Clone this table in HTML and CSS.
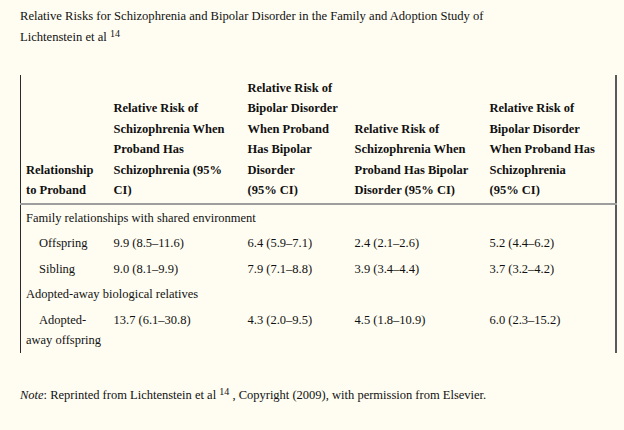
FILE: index.html
```html
<!DOCTYPE html>
<html lang="en">
<head>
<meta charset="utf-8">
<title>Relative Risks for Schizophrenia and Bipolar Disorder</title>
<link rel="stylesheet" href="styles.css">
</head>
<body>
<p class="caption">Relative Risks for Schizophrenia and Bipolar Disorder in the Family and Adoption Study of Lichtenstein et al <sup>14</sup></p>
<table class="risk-table">
  <colgroup>
    <col class="c1"><col class="c2"><col class="c3"><col class="c4"><col class="c5">
  </colgroup>
  <thead>
    <tr>
      <th>Relationship to Proband</th>
      <th>Relative Risk of Schizophrenia When Proband Has Schizophrenia (95% CI)</th>
      <th>Relative Risk of Bipolar Disorder When Proband Has Bipolar Disorder<br>(95% CI)</th>
      <th>Relative Risk of Schizophrenia When Proband Has Bipolar Disorder (95% CI)</th>
      <th>Relative Risk of Bipolar Disorder When Proband Has Schizophrenia<br>(95% CI)</th>
    </tr>
  </thead>
  <tbody>
    <tr><td colspan="5">Family relationships with shared environment</td></tr>
    <tr><td class="indent">Offspring</td><td>9.9 (8.5–11.6)</td><td>6.4 (5.9–7.1)</td><td>2.4 (2.1–2.6)</td><td>5.2 (4.4–6.2)</td></tr>
    <tr><td class="indent">Sibling</td><td>9.0 (8.1–9.9)</td><td>7.9 (7.1–8.8)</td><td>3.9 (3.4–4.4)</td><td>3.7 (3.2–4.2)</td></tr>
    <tr><td colspan="5">Adopted-away biological relatives</td></tr>
    <tr><td class="indent">Adopted-away offspring</td><td>13.7 (6.1–30.8)</td><td>4.3 (2.0–9.5)</td><td>4.5 (1.8–10.9)</td><td>6.0 (2.3–15.2)</td></tr>
  </tbody>
</table>
<p class="note"><em>Note</em>: Reprinted from Lichtenstein et al <sup>14</sup> , Copyright (2009), with permission from Elsevier.</p>
</body>
</html>
```

FILE: styles.css
```css
html, body {
  background: #fffdf2;
}
body {
  margin: 0;
  padding: 6px 9px 0 20px;
  font-family: "Liberation Serif", "Times New Roman", serif;
  font-size: 12.5px;
  color: #111;
}
.caption {
  margin: 0;
  max-width: 520px;
  font-size: 12.6px;
  line-height: 21px;
}
sup {
  font-size: 0.8em;
  line-height: 0;
  vertical-align: 0.4em;
}
.risk-table {
  margin-top: 27px;
  width: 595px;
  table-layout: fixed;
  border-collapse: collapse;
  border-left: 1px solid #2a2a2a;
  border-right: 2px solid #5a5a5a;
  line-height: 20.4px;
}
.c1 { width: 88px; }
.c2 { width: 134px; }
.c3 { width: 107px; }
.c4 { width: 135px; }
.c5 { width: 131px; }
.risk-table th,
.risk-table td {
  padding: 2.5px 4px 2.5px 5px;
  text-align: left;
  vertical-align: top;
}
.risk-table th {
  vertical-align: bottom;
  font-weight: bold;
  padding-top: 3px;
  padding-bottom: 3px;
}
.risk-table thead tr {
  border-bottom: 2px solid #9e9e9e;
}
.indent {
  text-indent: 13px;
}
.note {
  margin: 32px 0 0;
  line-height: 21px;
}
```
